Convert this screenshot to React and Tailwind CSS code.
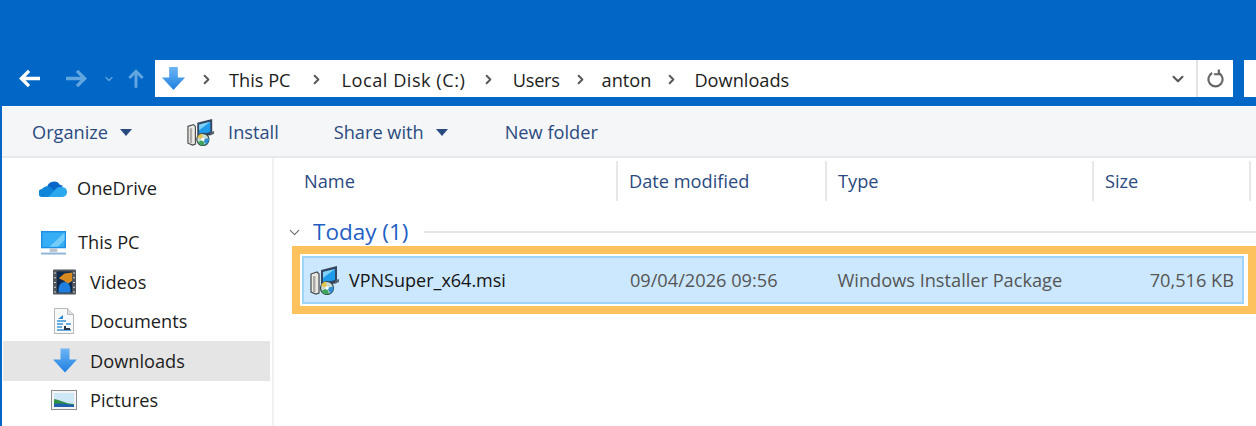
import { ChevronRight, ChevronDown } from "lucide-react"

const FONT = "font-['Open_Sans','Noto_Sans',sans-serif]"

function BlueArrowDown({ className }) {
  return (
    <svg viewBox="0 0 26 26" className={className}>
      <defs>
        <linearGradient id="dlGrad" x1="0" y1="0" x2="0" y2="1">
          <stop offset="0%" stopColor="#6db5f5" />
          <stop offset="100%" stopColor="#1f7fe0" />
        </linearGradient>
      </defs>
      <path d="M8.5 1h9v11H25L13 25 1 12h7.5z" fill="url(#dlGrad)" />
    </svg>
  )
}

function NavArrow({ dir, color, className }) {
  const d = dir === "left" ? "M23 11H4M11.500 3l-8 8 8 8" : dir === "right" ? "M1 11h19M12.500 3l8 8-8 8" : "M12 22V3M4 10.500l8-8 8 8"
  return (
    <svg viewBox="0 0 24 22" className={className} fill="none" stroke={color} strokeWidth="3.500">
      <path d={d} />
    </svg>
  )
}

function InstallerIcon({ className }) {
  return (
    <svg viewBox="0 0 30 30" className={className}>
      {/* cabinet */}
      <path d="M1 9l6-2 2 2v19l-3 1-5-2z" fill="#eceae4" stroke="#45494c" strokeWidth="1.200" />
      <rect x="3" y="11" width="2.500" height="16" fill="#a9aaa6" />
      {/* monitor */}
      <path d="M11 5l16-4v17l-16 3z" fill="#34465f" />
      <path d="M13 7l12-3v11l-12 3z" fill="#1e9bea" />
      <path d="M13 7l12-3-12 9z" fill="#7fd0f7" />
      <path d="M24 19l5-2v-3l-3 1z" fill="#59646e" />
      {/* disc */}
      <circle cx="17" cy="23" r="6.500" fill="#c7dccf" stroke="#32404a" strokeWidth="1.200" />
      <path d="M17 23l-6-2.500a6.500 6.500 0 0 1 5-4z" fill="#e3c54d" />
      <path d="M17 23l2 6a6.500 6.500 0 0 1-7.500-3z" fill="#3fa45e" />
      <path d="M17 23l6.300-1.500a6.500 6.500 0 0 1-3 7z" fill="#2f8fd0" />
      <circle cx="17" cy="23" r="1.800" fill="#ffffff" />
    </svg>
  )
}

function OneDriveIcon() {
  return (
    <svg viewBox="0 0 28 18" className="w-[28px] h-[18px]">
      <path d="M8 9a7 7 0 0 1 13-3 5 5 0 0 1 3 1L13 14z" fill="#0a66c8" />
      <path d="M4 18a4 4 0 0 1-1-8 6 6 0 0 1 8-2l5 4-6 6z" fill="#0f86d8" />
      <path d="M9 18l7-7a6 6 0 0 1 6-3 5 5 0 0 1 2 10z" fill="#2ba8ee" />
    </svg>
  )
}

function MonitorIcon() {
  return (
    <svg viewBox="0 0 28 26" className="w-[27px] h-[25px]">
      <rect x="1" y="1" width="26" height="18" fill="#1d8fe6" />
      <rect x="2.500" y="2.500" width="23" height="15" fill="#35aef5" />
      <path d="M10 17.500L25.500 2.500v8l-7 7z" fill="#74cdf9" />
      <rect x="10" y="19" width="8" height="4" fill="#b9c6d2" />
      <rect x="1" y="23.500" width="26" height="2" fill="#8fb4d8" />
    </svg>
  )
}

function VideosIcon() {
  return (
    <svg viewBox="0 0 24 26" className="w-[23px] h-[26px]">
      <rect x="0" y="0" width="24" height="26" rx="1" fill="#50565b" />
      <rect x="4" y="2" width="16" height="22" fill="#10294e" />
      <path d="M6 9l6-5 8-1v9l-5 3-3-3z" fill="#d98a1f" />
      <path d="M6 24c-1-7 2-11 6-11s7 4 6 11z" fill="#1f7fe0" />
      <path d="M2 3v1M2 8v1M2 13v1M2 18v1M2 23v1M22 3v1M22 8v1M22 13v1M22 18v1M22 23v1" stroke="#dcdcdc" strokeWidth="2" />
    </svg>
  )
}

function DocumentsIcon() {
  return (
    <svg viewBox="0 0 20 26" className="w-[20px] h-[26px]">
      <path d="M.5.5h13l6 6v19H.500z" fill="#f7f8f9" stroke="#b5b8bb" />
      <path d="M13.500.5v6h6" fill="#dfe2e5" stroke="#b5b8bb" />
      <path d="M4 11l5-4v4z" fill="#2f8ad6" />
      <path d="M3 13h9M3 16h6M3 19h5M3 22h14M12 16h5" stroke="#3a95d8" strokeWidth="1.500" fill="none" />
      <path d="M10 18h2v2h4v2h-6z" fill="#283845" />
    </svg>
  )
}

function PicturesIcon() {
  return (
    <svg viewBox="0 0 26 20" className="w-[26px] h-[20px]">
      <rect x=".5" y=".5" width="25" height="19" fill="#f4f4f4" stroke="#8b8f93" />
      <rect x="3" y="3" width="20" height="14" fill="#cfe8f7" />
      <path d="M3 9c5 1 7 2 10 3s6 2 10 2v3H3z" fill="#2f8f46" />
      <path d="M3 14c6-1 12 0 20 1v2H3z" fill="#1f5fb0" />
    </svg>
  )
}

function Crumb({ chevronClass, children, className }) {
  return (
    <>
      <ChevronRight size={15} strokeWidth={3.200} className={`text-[#5a5a5a] shrink-0 ${chevronClass}`} />
      <span className={className}>{children}</span>
    </>
  )
}

function NavItem({ icon, label, indent, active, className, labelClass }) {
  return (
    <div className={`flex items-center h-[39.500px] shrink-0 ${active ? "bg-[#e5e5e5]" : ""} ${className || ""}`}>
      <div className={`flex items-center justify-center w-[30px] shrink-0 ${indent ? "ml-[47px]" : "ml-[36px]"}`}>{icon}</div>
      <span className={`text-[#1c1c1c] ${labelClass || (indent ? "ml-[11px]" : "ml-[9px]")}`}>{label}</span>
    </div>
  )
}

function ColumnHeader({ label, className }) {
  return (
    <div className={`flex items-center h-[40px] border-r-2 border-[#e6e8ea] shrink-0 ${className}`}>
      <span className="text-[#2a4a80]">{label}</span>
    </div>
  )
}

export default function App() {
  return (
    <div className={`${FONT} w-[1256px] h-[426px] overflow-hidden bg-[#0067c6] text-[18.200px] leading-none flex flex-col`}>
      {/* Title + address bar */}
      <div className="h-[106px] shrink-0 flex items-end pb-[9px]">
        <div className="flex items-center h-[37px] w-full">
          <div className="flex items-center w-[155px] shrink-0 pl-[18px]">
            <NavArrow dir="left" color="#ffffff" className="w-[23px] h-[21px]" />
            <NavArrow dir="right" color="#62a6e0" className="w-[23px] h-[21px] ml-[24px]" />
            <ChevronDown size={12} strokeWidth={2.500} className="text-[#62a6e0] ml-[15px]" />
            <NavArrow dir="up" color="#62a6e0" className="w-[20px] h-[21px] ml-[11px]" />
          </div>
          <div className="flex items-center h-full w-[1078px] bg-white">
            <BlueArrowDown className="w-[25px] h-[25px] ml-[6px] shrink-0" />
            <div className="flex items-center text-[#1c1c1c] pt-[3px]">
              <Crumb chevronClass="ml-[12.500px]" className="ml-[15.500px]">This PC</Crumb>
              <Crumb chevronClass="ml-[18px]" className="ml-[18px] tracking-[0.5px]">Local Disk (C:)</Crumb>
              <Crumb chevronClass="ml-[16px]" className="ml-[16.500px] tracking-[-0.3px]">Users</Crumb>
              <Crumb chevronClass="ml-[13.500px]" className="ml-[13.500px]">anton</Crumb>
              <Crumb chevronClass="ml-[12.500px]" className="ml-[15.500px]">Downloads</Crumb>
            </div>
            <div className="ml-auto flex items-center h-full">
              <ChevronDown size={18} strokeWidth={2.800} className="text-[#555] mr-[9px]" />
              <div className="w-[2px] h-full bg-[#e4e4e4]" />
              <div className="w-[35px] flex justify-center">
                <svg viewBox="0 0 20 20" className="w-[19px] h-[19px]" fill="none" stroke="#666" strokeWidth="2.300">
                  <path d="M6.500 4.200a7.500 7.500 0 1 0 7 0" />
                  <path d="M13.500 .5v5h-5" />
                </svg>
              </div>
            </div>
          </div>
          <div className="w-[12px] ml-[11px] h-full bg-white" />
        </div>
      </div>

      {/* Window body */}
      <div className="flex-1 flex flex-col ml-[2px] bg-white min-h-0">
        <div className="h-[52px] shrink-0 flex items-center bg-[#f5f6f7] border-t border-[#fbfcfd] border-b-2 border-b-[#e8e9ea] text-[#2a4a80] pt-[1px]">
          <span className="ml-[30px]">Organize</span>
          <svg viewBox="0 0 12 7" className="w-[12px] h-[7px] ml-[12px]"><path d="M0 0h12L6 7z" fill="#2a4a80" /></svg>
          <InstallerIcon className="w-[28px] h-[28px] ml-[55px]" />
          <span className="ml-[13px]">Install</span>
          <span className="ml-[55px]">Share with</span>
          <svg viewBox="0 0 12 7" className="w-[12px] h-[7px] ml-[12px]"><path d="M0 0h12L6 7z" fill="#2a4a80" /></svg>
          <span className="ml-[57px]">New folder</span>
        </div>

        <div className="flex flex-1 min-h-0">
          <div className="w-[272px] shrink-0 border-r-2 border-[#f0f0f0] flex flex-col overflow-hidden pt-[10px]">
            <NavItem icon={<OneDriveIcon />} label="OneDrive" />
            <NavItem icon={<MonitorIcon />} label="This PC" className="mt-[15px]" labelClass="ml-[10px]" />
            <NavItem icon={<VideosIcon />} label="Videos" indent />
            <NavItem icon={<DocumentsIcon />} label="Documents" indent />
            <NavItem icon={<BlueArrowDown className="w-[26px] h-[27px]" />} label="Downloads" indent active className="w-[267px] ml-[1px]" labelClass="ml-[10px]" />
            <NavItem icon={<PicturesIcon />} label="Pictures" indent />
          </div>

          <div className="flex-1 min-w-0 flex flex-col">
            <div className="flex h-[43px] shrink-0 pt-[3px]">
              <ColumnHeader label="Name" className="w-[344px] pl-[30px]" />
              <ColumnHeader label="Date modified" className="w-[209px] pl-[11px]" />
              <ColumnHeader label="Type" className="w-[267px] pl-[11px]" />
              <ColumnHeader label="Size" className="w-[157px] pl-[11px]" />
            </div>
            <div className="flex items-center h-[28px] shrink-0 mt-[17px]">
              <ChevronDown size={17} strokeWidth={1.500} className="text-[#666] ml-[12px]" />
              <span className="ml-[10px] text-[22.500px] text-[#1f5fc4]">Today (1)</span>
              <div className="flex-1 h-[2px] bg-[#e4e5e7] ml-[16px]" />
            </div>
            <div className="ml-[18px] h-[68px] border-[8px] border-[#fdc15e] bg-white pt-[2px] pl-[2px] pr-[4px] shrink-0">
              <div className="flex items-center h-[48px] bg-[#cce8ff] border-2 border-[#9ed3fc]">
                <InstallerIcon className="w-[30px] h-[30px] ml-[6px] shrink-0" />
                <span className="ml-[9px] text-[18px] text-[#141414]">VPNSuper_x64.msi</span>
                <span className="ml-[124px] text-[#555]">09/04/2026 09:56</span>
                <span className="ml-[60px] text-[#555]">Windows Installer Package</span>
                <span className="ml-auto mr-[8px] text-[#555]">70,516 KB</span>
              </div>
            </div>
          </div>
        </div>
      </div>
    </div>
  )
}
